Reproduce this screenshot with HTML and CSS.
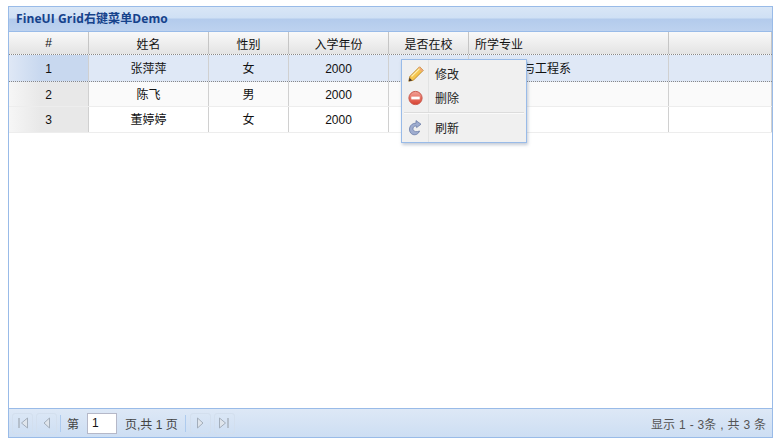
FILE: index.html
```html
<!DOCTYPE html>
<html lang="zh">
<head>
<meta charset="utf-8">
<title>FineUI Grid右键菜单Demo</title>
<link rel="stylesheet" href="styles.css">
</head>
<body>
<div class="panel">
  <div class="title">FineUI Grid右键菜单Demo</div>
  <div class="grid">
    <div class="row head">
      <div class="cell num">#</div><div class="cell">姓名</div><div class="cell">性别</div><div class="cell">入学年份</div><div class="cell">是否在校</div><div class="cell left">所学专业</div><div class="cell"></div>
    </div>
    <div class="row selected r1">
      <div class="cell num">1</div><div class="cell">张萍萍</div><div class="cell">女</div><div class="cell digit">2000</div><div class="cell"></div><div class="cell left">材料科学与工程系</div><div class="cell"></div>
    </div>
    <div class="row alt r2">
      <div class="cell num">2</div><div class="cell">陈飞</div><div class="cell">男</div><div class="cell digit">2000</div><div class="cell"></div><div class="cell left"></div><div class="cell"></div>
    </div>
    <div class="row r3">
      <div class="cell num">3</div><div class="cell">董婷婷</div><div class="cell">女</div><div class="cell digit">2000</div><div class="cell"></div><div class="cell left"></div><div class="cell"></div>
    </div>
  </div>
  <div class="pager">
    <span class="btn"><svg width="12" height="12" viewBox="0 0 12 12"><rect x="1" y="1" width="2" height="10" fill="#b4bfcc"/><path d="M10.5 1 L4.5 6 L10.5 11 Z" fill="#dfe5ec" stroke="#a3aebb"/></svg></span>
    <span class="btn"><svg width="12" height="12" viewBox="0 0 12 12"><path d="M8.5 1 L3 6 L8.5 11 Z" fill="#dfe5ec" stroke="#a3aebb"/></svg></span>
    <span class="sep"></span>
    <span class="ptext">第</span>
    <span class="pinput">1</span>
    <span class="ptext">页,共 1 页</span>
    <span class="sep sep2"></span>
    <span class="btn"><svg width="12" height="12" viewBox="0 0 12 12"><path d="M3.5 1 L9 6 L3.5 11 Z" fill="#dfe5ec" stroke="#a3aebb"/></svg></span>
    <span class="btn"><svg width="12" height="12" viewBox="0 0 12 12"><path d="M1.5 1 L7.5 6 L1.5 11 Z" fill="#dfe5ec" stroke="#a3aebb"/><rect x="9" y="1" width="2" height="10" fill="#b4bfcc"/></svg></span>
    <span class="info">显示 1 - 3条 , 共 3 条</span>
  </div>
  <div class="menu">
    <div class="item">
      <svg class="ico" width="16" height="16" viewBox="0 0 16 16"><path d="M0.8 15.2 L1.8 10.6 L11.6 0.8 L15.2 4.4 L5.4 14.2 Z" fill="#f6c64e" stroke="#b8842a" stroke-width="0.9"/><path d="M10.2 2.2 L13.8 5.8 L15.2 4.4 L11.6 0.8 Z" fill="#f0a878"/><path d="M0.8 15.2 L1.6 11.8 L4.2 14.4 Z" fill="#40322a"/><path d="M3.5 10.5 L11.5 2.6" stroke="#fff0b0" stroke-width="1.2"/></svg>
      <span class="label">修改</span>
    </div>
    <div class="item">
      <svg class="ico" width="16" height="16" viewBox="0 0 16 16"><defs><linearGradient id="rd" x1="0" y1="0" x2="0" y2="1"><stop offset="0" stop-color="#f3a49a"/><stop offset="1" stop-color="#d8402f"/></linearGradient></defs><circle cx="7.5" cy="8" r="6.6" fill="url(#rd)" stroke="#c9584c"/><rect x="3.3" y="6.6" width="8.4" height="2.8" fill="#fff"/></svg>
      <span class="label">删除</span>
    </div>
    <div class="divider"></div>
    <div class="item">
      <svg class="ico" width="16" height="16" viewBox="0 0 16 16"><path d="M8 0.6 L13 4.2 L8.6 7.6 L8.6 6 C6 5.6 4.6 7.4 5 9.4 C5.4 11.6 8.4 12.4 11.6 11 C10.6 14 7.6 15.4 5 14.6 C2.2 13.6 1 10.8 1.6 8 C2.2 5 5 3 8 3.2 Z" fill="#9fadd0" stroke="#6c7ea8" stroke-width="0.8"/></svg>
      <span class="label">刷新</span>
    </div>
  </div>
</div>
</body>
</html>
```
FILE: styles.css
```css
html, body { margin: 0; padding: 0; background: #fff; }
body { padding: 6px 0 0 8px; font-family: "Liberation Sans", "Noto Sans CJK SC", sans-serif; font-size: 12px; color: #111; }
.panel { position: relative; box-sizing: border-box; width: 765px; height: 432px; border: 1px solid #99bbe8; display: flex; flex-direction: column; }
.title { box-sizing: border-box; height: 25px; line-height: 23px; padding-left: 7px; font-family: "Open Sans", "Noto Sans CJK SC", sans-serif; font-weight: bold; font-size: 12px; letter-spacing: 0.1px; color: #15428b; border-bottom: 1px solid #99bbe8; background: linear-gradient(to bottom, #d9e6f6 0, #cfe0f4 11px, #b3cbec 12px, #bdd2ef 100%); }
.grid { flex: 1; }
.row { display: grid; grid-template-columns: 80px 120px 80px 100px 80px 200px 103px; box-sizing: border-box; }
.cell { box-sizing: border-box; border-right: 1px solid #d0d0d0; padding-bottom: 2px; text-align: center; overflow: hidden; white-space: nowrap; display: flex; align-items: center; justify-content: center; }
.cell.left { justify-content: flex-start; padding-left: 6px; }
.cell.digit, .cell.num { padding-bottom: 0; padding-top: 1px; }
.head { height: 23px; background: linear-gradient(to bottom, #f9f9f9, #e3e3e3); border-bottom: 1px dotted #888; }
.head .cell { border-right-color: #c5c5c5; padding-bottom: 0; padding-top: 0; }
.r1 { height: 27px; background: #dfe8f6; border-bottom: 1px dotted #888; }
.r2 { height: 25px; background: #fafafa; border-bottom: 1px solid #ededed; }
.r3 { height: 26px; background: #fff; border-bottom: 1px solid #ededed; }
.num { background: linear-gradient(to right, #f6f6f6, #e8e8e8 40%); }
.head .num { background: none; }
.selected .num { background: linear-gradient(to right, #dfe8f6, #c8d8ef 40%); }
.pager { box-sizing: border-box; height: 29px; border-top: 1px solid #99bbe8; background: linear-gradient(to bottom, #dde8f6, #cddef3); display: flex; align-items: center; padding: 0 6px 0 3px; color: #333; }
.btn { box-sizing: border-box; width: 21px; height: 21px; margin-right: 3px; border: 1px solid #d3dfee; border-radius: 3px; display: flex; align-items: center; justify-content: center; }
.sep { width: 1px; height: 17px; background: #aecbee; margin: 0 6px 0 0; }
.sep2 { margin: 0 4px 0 7px; }
.ptext { color: #444; }
.pinput { box-sizing: border-box; width: 30px; height: 21px; line-height: 19px; margin: 0 8px 0 8px; padding-left: 4px; background: #fff; border: 1px solid #b5b8c8; color: #111; }
.info { margin-left: auto; color: #555; word-spacing: 0.6px; }
.menu { position: absolute; left: 392px; top: 52px; box-sizing: border-box; width: 126px; height: 84px; padding: 2px 0 0; background: #f0f0f0; border: 1px solid #99bbe8; box-shadow: 1px 2px 3px rgba(90,110,140,.35); background-image: linear-gradient(#e2e3e3, #e2e3e3); background-size: 1px 100%; background-position: 26px 0; background-repeat: no-repeat; }
.item { height: 24px; display: flex; align-items: center; padding-left: 6px; color: #222; }
.label { padding-bottom: 2px; }
.ico { flex: none; margin-right: 11px; }
.divider { height: 1px; margin: 2px 2px 2px 2px; background: #dcdcdc; border-bottom: 1px solid #fafafa; }
```
